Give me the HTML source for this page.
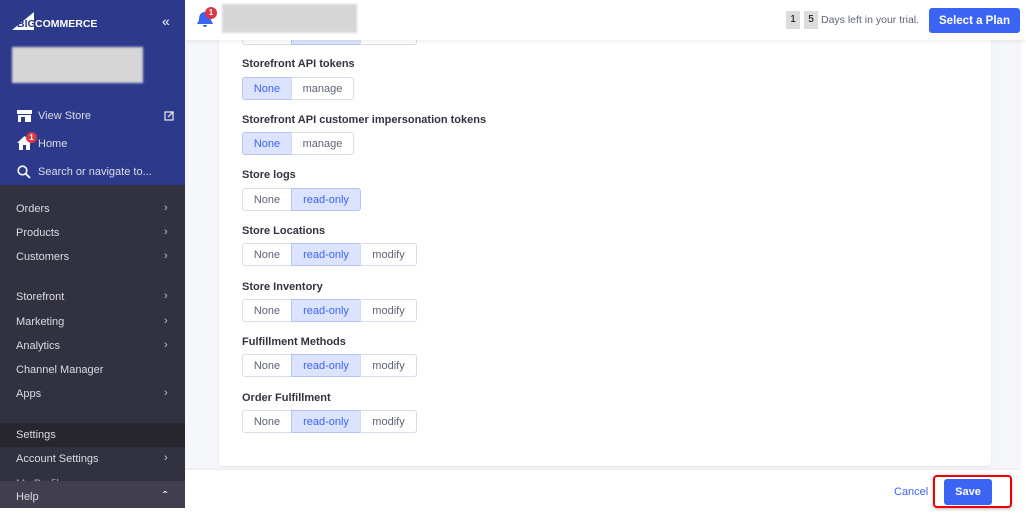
<!DOCTYPE html>
<html><head><meta charset="utf-8"><style>
*{margin:0;padding:0;box-sizing:border-box}
body{width:1026px;height:516px;position:relative;overflow:hidden;background:#fff;font-family:"Liberation Sans",sans-serif;font-size:11px}
.a{position:absolute}
.side{left:0;top:0;width:185px;height:508px;background:#32313f}
.blue{left:0;top:0;width:185px;height:185px;background:#2d3a8c}
.nav{left:16px;color:#dcdce4;font-size:11px}
.chev{left:164px;color:#c8c8d0;font-size:11px}
.main{left:185px;top:40px;width:836px;height:430px;background:#f4f6fa}
.card{left:219px;top:40px;width:772px;height:426px;background:#fff;border-radius:0 0 4px 4px;box-shadow:0 1px 2px rgba(0,0,0,.08)}
.lbl{left:242px;font-weight:bold;color:#313440;font-size:11px}
.grp{left:242px;display:flex;height:23px}
.grp span{border:1px solid #d9dce9;height:23px;line-height:22px;text-align:center;color:#5e637a;font-size:11px;margin-left:-1px;background:#fff}
.grp span:first-child{border-radius:3px 0 0 3px;margin-left:0}
.grp span:last-child{border-radius:0 3px 3px 0}
.grp span.on{background:#dbe3fe;border-color:#b5c4f7;color:#3c64f4}
</style></head><body>
<div class="a side"></div>
<div class="a blue"></div>
<div class="a" style="left:12px;top:12px;width:0;height:0;border-left:22px solid transparent;border-bottom:18px solid #fff"></div>
<div class="a" style="left:17px;top:18px;color:#2d3a8c;font-weight:bold;font-size:10.5px">BIG</div>
<div class="a" style="left:35px;top:18px;color:#fff;font-weight:bold;font-size:10.5px">COMMERCE</div>
<div class="a" style="left:162px;top:13px;color:#fff;font-size:14px">«</div>
<div class="a" style="left:12px;top:47px;width:131px;height:36px;background:#d6d6d6;filter:blur(1px)"></div>
<svg class="a" style="left:17px;top:110px" width="15" height="13"><rect x="0" y="0" width="15" height="4" fill="#fff"/><rect x="1" y="5" width="13" height="7" fill="#fff"/><rect x="4" y="7" width="4" height="5" fill="#2d3a8c"/></svg>
<div class="a nav" style="top:110px;left:38px">View Store</div>
<svg class="a" style="left:164px;top:111px" width="10" height="10"><rect x="1" y="1" width="8" height="8" fill="none" stroke="#dcdce4" stroke-width="1.3"/><path d="M4 6 L9 1 M6 1 H9 V4" stroke="#dcdce4" stroke-width="1.3" fill="none"/></svg>
<svg class="a" style="left:17px;top:136px" width="15" height="14"><path d="M0 7 L7.5 0 L15 7 H13 V14 H9 V9 H6 V14 H2 V7Z" fill="#fff"/></svg>
<div class="a" style="left:26px;top:132px;width:11px;height:11px;border-radius:50%;background:#db3643;color:#fff;font-size:8px;text-align:center;line-height:11px;font-weight:bold">1</div>
<div class="a nav" style="top:138px;left:38px">Home</div>
<svg class="a" style="left:17px;top:165px" width="14" height="14"><circle cx="5.5" cy="5.5" r="4.3" fill="none" stroke="#fff" stroke-width="1.6"/><path d="M9 9 L13 13" stroke="#fff" stroke-width="1.8"/></svg>
<div class="a nav" style="top:166px;left:38px">Search or navigate to...</div>
<div class="a nav" style="top:203px">Orders</div><div class="a chev" style="top:202px">›</div>
<div class="a nav" style="top:227px">Products</div><div class="a chev" style="top:226px">›</div>
<div class="a nav" style="top:251px">Customers</div><div class="a chev" style="top:250px">›</div>
<div class="a nav" style="top:291px">Storefront</div><div class="a chev" style="top:290px">›</div>
<div class="a nav" style="top:316px">Marketing</div><div class="a chev" style="top:315px">›</div>
<div class="a nav" style="top:340px">Analytics</div><div class="a chev" style="top:339px">›</div>
<div class="a nav" style="top:364px">Channel Manager</div>
<div class="a nav" style="top:388px">Apps</div><div class="a chev" style="top:387px">›</div>
<div class="a" style="left:0;top:423px;width:185px;height:24px;background:#27262f"></div>
<div class="a nav" style="top:429px">Settings</div>
<div class="a nav" style="top:453px">Account Settings</div><div class="a chev" style="top:452px">›</div>
<div class="a" style="left:0;top:481px;width:185px;height:27px;background:#413f4e"></div>
<div class="a nav" style="top:478px;height:3px;overflow:hidden;color:#aaa">My Profile</div>
<div class="a nav" style="top:491px">Help</div><div class="a" style="left:163px;top:489px;color:#fff;font-size:12px;font-weight:bold">ˆ</div>
<div class="a" style="left:185px;top:0;width:841px;height:40px;background:#fff;box-shadow:0 2px 3px rgba(0,0,0,.06);z-index:2"></div>
<svg class="a" style="left:197px;top:11px;z-index:3" width="16" height="18"><path d="M8 1 C3 1 2 5 2 9 L0 13 H16 L14 9 C14 5 13 1 8 1Z M6 14 A2 2 0 0 0 10 14Z" fill="#3c64f4"/></svg>
<div class="a" style="left:205px;top:7px;width:12px;height:12px;border-radius:50%;background:#db3643;color:#fff;font-size:8px;text-align:center;line-height:12px;font-weight:bold;z-index:3">1</div>
<div class="a" style="left:222px;top:4px;width:135px;height:29px;background:#d6d6d6;z-index:3;filter:blur(1px)"></div>
<div class="a" style="left:786px;top:11px;width:14px;height:18px;background:#dcdcdc;text-align:center;line-height:18px;font-size:10px;z-index:3">1</div>
<div class="a" style="left:804px;top:11px;width:14px;height:18px;background:#dcdcdc;text-align:center;line-height:18px;font-size:10px;z-index:3">5</div>
<div class="a" style="left:821px;top:14px;color:#5e637a;font-size:10.5px;z-index:3">Days left in your trial.</div>
<div class="a" style="left:929px;top:8px;width:91px;height:25px;background:#3c64f4;border-radius:3px;color:#fff;font-weight:bold;font-size:11.5px;text-align:center;line-height:26px;z-index:3">Select a Plan</div>
<div class="a main"></div>
<div class="a card"></div>
<div class="a grp" style="top:22px;z-index:1"><span style="width:50px"></span><span class="on" style="width:70px"></span><span style="width:57px"></span></div>
<div class="a lbl" style="top:58px">Storefront API tokens</div>
<div class="a grp" style="top:77px"><span class="on" style="width:50px">None</span><span style="width:63px">manage</span></div>
<div class="a lbl" style="top:114px">Storefront API customer impersonation tokens</div>
<div class="a grp" style="top:132px"><span class="on" style="width:50px">None</span><span style="width:63px">manage</span></div>
<div class="a lbl" style="top:169px">Store logs</div>
<div class="a grp" style="top:188px"><span style="width:50px">None</span><span class="on" style="width:70px">read-only</span></div>
<div class="a lbl" style="top:225px">Store Locations</div>
<div class="a grp" style="top:243px"><span style="width:50px">None</span><span class="on" style="width:70px">read-only</span><span style="width:57px">modify</span></div>
<div class="a lbl" style="top:281px">Store Inventory</div>
<div class="a grp" style="top:299px"><span style="width:50px">None</span><span class="on" style="width:70px">read-only</span><span style="width:57px">modify</span></div>
<div class="a lbl" style="top:336px">Fulfillment Methods</div>
<div class="a grp" style="top:354px"><span style="width:50px">None</span><span class="on" style="width:70px">read-only</span><span style="width:57px">modify</span></div>
<div class="a lbl" style="top:392px">Order Fulfillment</div>
<div class="a grp" style="top:410px"><span style="width:50px">None</span><span class="on" style="width:70px">read-only</span><span style="width:57px">modify</span></div>
<div class="a" style="left:185px;top:470px;width:836px;height:38px;background:#fff;box-shadow:0 -1px 2px rgba(0,0,0,.05)"></div>
<div class="a" style="left:894px;top:486px;color:#3c64f4;font-size:11px">Cancel</div>
<div class="a" style="left:933px;top:475px;width:79px;height:33px;border:2px solid #e00;border-radius:4px;box-shadow:0 1px 3px rgba(0,0,0,.3)"></div>
<div class="a" style="left:944px;top:479px;width:48px;height:26px;background:#3c64f4;border-radius:3px;color:#fff;font-weight:bold;text-align:center;line-height:26px;font-size:11px">Save</div>
</body></html>
